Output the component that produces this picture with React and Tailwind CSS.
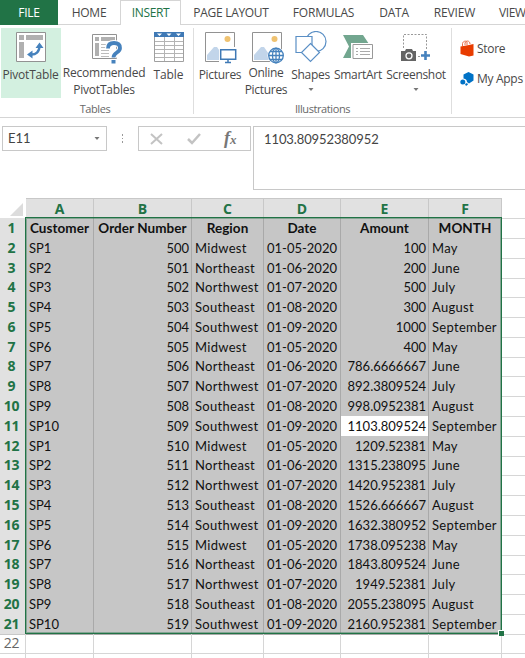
import React from 'react'

const tabs = [
  { name: 'HOME', style: 'w-[62px] tracking-[-0.25px]' },
  { name: 'INSERT', style: 'w-[61px] tracking-[-0.4px]', active: true },
  { name: 'PAGE LAYOUT', style: 'w-[100px] tracking-[-0.3px]' },
  { name: 'FORMULAS', style: 'w-[85px] tracking-[-0.2px]' },
  { name: 'DATA', style: 'w-[56px] tracking-[-0.2px]' },
  { name: 'REVIEW', style: 'w-[65px] tracking-[-0.1px]' },
  { name: 'VIEW', style: 'w-[38px] pl-3 text-left! tracking-[-0.4px]' },
]

const columns = [
  { letter: 'A', title: 'Customer' },
  { letter: 'B', title: 'Order Number' },
  { letter: 'C', title: 'Region' },
  { letter: 'D', title: 'Date' },
  { letter: 'E', title: 'Amount' },
  { letter: 'F', title: 'MONTH' },
]

const regions = ['Midwest', 'Northeast', 'Northwest', 'Southeast', 'Southwest']
const dates = ['01-05-2020', '01-06-2020', '01-07-2020', '01-08-2020', '01-09-2020']
const months = ['May', 'June', 'July', 'August', 'September']
const amounts = [
  '100', '200', '500', '300', '1000', '400', '786.6666667', '892.3809524', '998.0952381', '1103.809524',
  '1209.52381', '1315.238095', '1420.952381', '1526.666667', '1632.380952', '1738.095238', '1843.809524',
  '1949.52381', '2055.238095', '2160.952381',
]

const rows = amounts.map((amount, i) => ({
  customer: `SP${(i % 10) + 1}`,
  order: 500 + i,
  region: regions[i % 5],
  date: dates[i % 5],
  amount,
  month: months[i % 5],
}))

const gridCols = 'grid grid-cols-[26px_68px_98px_72px_77px_88px_73px_1fr]'

function PivotIcon() {
  return (
    <svg width="30" height="30" viewBox="0 0 30 30" fill="none">
      <path d="M.5.5h29v29H.5z" fill="#fff" stroke="#929292" />
      <path d="M3 3h5v5H3zM10 3h17v5H10zM3 10h5v16H3z" fill="#b0b0b0" />
      <path d="M14 22.500c6 .6 9.500-2.500 9.500-9" stroke="#4682bd" strokeWidth="2.400" />
      <path d="M23.500 10.500 27.500 16h-8zM11 22.500l5.500-4v8z" fill="#4682bd" />
    </svg>
  )
}

function RecommendedIcon() {
  return (
    <svg width="32" height="32" viewBox="0 0 32 32" fill="none">
      <path d="M1.500 2.500h24v24h-24z" fill="#fff" stroke="#929292" />
      <path d="M4 5h4v4H4zM10 5h14v4H10zM4 11h4v13H4z" fill="#b0b0b0" />
      <path d="M10 12.500h10M10 15.500h9M10 18.500h8M10 21.500h8M10 24.500h8" stroke="#bdbdbd" />
      <path d="M17 16.500c0-4 2.500-5.500 6-5.500 4 0 6 2 6 5 0 5-6.500 4-6.500 10" stroke="#fff" strokeWidth="6" />
      <path d="M17 16.500c0-4 2.500-5.500 6-5.500 4 0 6 2 6 5 0 5-6.500 4-6.500 9.500" stroke="#4682bd" strokeWidth="3.800" />
      <path d="M20.500 28h4v3.500h-4z" fill="#4682bd" />
    </svg>
  )
}

function TableIcon() {
  return (
    <svg width="30" height="30" viewBox="0 0 30 30" fill="none">
      <path d="M.5.5h29v29H.5z" fill="#fff" stroke="#a0a0a0" />
      <path d="M0 0h30v5H0z" fill="#3f79b5" />
      <path d="M3 1.500h5L5.500 4zM12.500 1.500h5L15 4zM22 1.500h5L24.500 4z" fill="#fff" />
      <path d="M10.500 5v24M20.500 5v24M1 9.500h28M1 13.500h28M1 17.500h28M1 21.500h28M1 25.500h28" stroke="#b4b4b4" />
    </svg>
  )
}

function PhotoBase() {
  return (
    <>
      <path d="M.5.5h29v29H.5z" fill="#fff" stroke="#929292" />
      <circle cx="22.500" cy="7" r="3" fill="#efc271" />
      <path d="M2 28v-5l7-8h3l9 13z" fill="#c2d5ea" />
    </>
  )
}

function PicturesIcon() {
  return (
    <svg width="32" height="32" viewBox="0 0 32 32" fill="none">
      <PhotoBase />
      <path d="M14 15h18v17H14z" fill="#fff" />
      <path d="M15.700 17.700h15v9.500h-15z" fill="#fff" stroke="#3f79b5" strokeWidth="1.500" />
      <path d="M23 27.500V30M20 30.500h6" stroke="#3f79b5" strokeWidth="1.500" />
    </svg>
  )
}

function OnlinePicturesIcon() {
  return (
    <svg width="32" height="32" viewBox="0 0 32 32" fill="none">
      <PhotoBase />
      <circle cx="24" cy="23.500" r="8.500" fill="#fff" />
      <g stroke="#4682bd" strokeWidth="1.300">
        <circle cx="24" cy="23.500" r="7.300" />
        <ellipse cx="24" cy="23.500" rx="3.500" ry="7.300" />
        <path d="M24 16v15M16.700 23.500h14.600M18 19.500h12M18 27.500h12" />
      </g>
    </svg>
  )
}

function ShapesIcon() {
  return (
    <svg width="32" height="32" viewBox="0 0 32 32" fill="#fff" stroke="#5a8fc5" strokeWidth="1.200">
      <circle cx="21" cy="10.500" r="10" />
      <path d="M1 5.500h16v16H1z" />
      <path d="m15.500 12.500 9 9-9 9-9-9z" />
    </svg>
  )
}

function SmartArtIcon() {
  return (
    <svg width="30" height="26" viewBox="0 0 30 26" fill="none">
      <path d="M0 0h20l6 9-8 14H0l6-11.500z" fill="#72a68f" />
      <path d="M8 8h22v18H8z" fill="#fff" />
      <path d="M10 9.500h19.500v14H10z" fill="#fff" stroke="#999" />
      <path d="M13 13.500h2M17 13.500h10M13 16.500h2M17 16.500h10M13 19.500h2M17 19.500h10" stroke="#aaa" />
    </svg>
  )
}

function ScreenshotIcon() {
  return (
    <svg width="30" height="30" viewBox="0 0 30 30" fill="none">
      <path d="M2.500 16V2.500h23V18M17 24.500h3" stroke="#999" strokeDasharray="2 1.500" />
      <path d="M0 19h4l1-2h6l1 2h3v10H0z" fill="#656565" />
      <circle cx="8" cy="23.800" r="3" fill="#656565" stroke="#fff" strokeWidth="1.300" />
      <path d="M20 23.500h9M24.500 19v9" stroke="#4682bd" strokeWidth="2.600" />
    </svg>
  )
}

function StoreIcon() {
  return (
    <svg width="14" height="17" viewBox="0 0 14 17" fill="none">
      <path d="M2.500 6V3.500C3 1 6 .5 7 2v3M5 5V3c1-3 5-2.500 5 1" stroke="#e8704a" />
      <path d="M.5 6.500 9 5v11.500L.5 14z" fill="#e83c00" />
      <path d="m9 5 4.500-1v11.500l-4.500 1z" fill="#e83c00" />
    </svg>
  )
}

function AppsIcon() {
  return (
    <svg width="14" height="14" viewBox="0 0 14 14" fill="#0072c6">
      <path d="m8.500 0 5 2.500v6l-4.500 3-2-1.500c0-2-1-3-3.500-3.500v-4z" />
      <circle cx="2.800" cy="10" r="2.500" />
      <path d="m5 12 2-1 1 1.500-2 1.500z" />
    </svg>
  )
}

function RibbonButton({ icon, lines, className, dropdown, iconClass = '' }) {
  return (
    <div className={`flex h-[70px] shrink-0 flex-col items-center ${className}`}>
      <div className={`flex h-[38px] items-start justify-center pt-1 ${iconClass}`}>{icon}</div>
      {lines.map(line => (
        <div key={line} className="h-[17px] whitespace-nowrap leading-[17px]">{line}</div>
      ))}
      {dropdown && <Caret className="mt-[5px]" />}
    </div>
  )
}

function Caret({ className = '' }) {
  return (
    <svg className={className} width="6" height="4" viewBox="0 0 6 4">
      <path d="M.5 0h5L3 3z" fill="#777" />
    </svg>
  )
}

function Ribbon() {
  return (
    <div className="flex h-[93px] border-b border-[#d5d5d5] text-[12px] text-[#484848]">
      <div className="w-[193px] pl-px pt-[3px]">
        <div className="flex">
          <RibbonButton className="w-[60px] bg-[#d3f0e0] pr-px tracking-[-0.2px]" icon={<PivotIcon />} lines={['PivotTable']} />
          <RibbonButton className="w-[86px] tracking-[-0.2px]" iconClass="pl-[6px]" icon={<RecommendedIcon />} lines={['Recommended', 'PivotTables']} />
          <RibbonButton className="w-[43px] tracking-[-0.1px]" icon={<TableIcon />} lines={['Table']} />
        </div>
        <div className="mt-0.5 pr-1 text-center text-[11px] leading-[18px] tracking-[-0.4px] text-[#686868]">Tables</div>
      </div>
      <div className="my-[3px] w-px bg-[#dedede]" />
      <div className="w-[257px] pl-[3px] pt-[3px]">
        <div className="flex">
          <RibbonButton className="w-[46px] tracking-[-0.3px]" iconClass="pl-0.5" icon={<PicturesIcon />} lines={['Pictures']} />
          <RibbonButton className="w-[46px] tracking-[-0.3px]" iconClass="pl-1" icon={<OnlinePicturesIcon />} lines={['Online', 'Pictures']} />
          <RibbonButton className="w-[43px] tracking-[-0.3px]" iconClass="-mt-px mb-px" icon={<ShapesIcon />} lines={['Shapes']} dropdown />
          <RibbonButton className="w-[52px] tracking-[-0.3px]" iconClass="pt-[7px]" icon={<SmartArtIcon />} lines={['SmartArt']} />
          <RibbonButton className="w-[64px] tracking-[-0.3px]" icon={<ScreenshotIcon />} lines={['Screenshot']} dropdown />
        </div>
        <div className="mt-0.5 pr-[3px] text-center text-[11px] leading-[18px] tracking-[-0.4px] text-[#686868]">Illustrations</div>
      </div>
      <div className="my-[3px] w-px bg-[#dedede]" />
      <div className="flex flex-col gap-[13px] pl-2 pt-[15px] tracking-[-0.3px]">
        <div className="flex h-[17px] items-center gap-[3px]"><StoreIcon />Store</div>
        <div className="flex h-[17px] items-center gap-[3px] whitespace-nowrap"><AppsIcon />My Apps</div>
      </div>
    </div>
  )
}

function FormulaBar() {
  return (
    <div className="flex h-[80px] items-start pl-0.5 pt-2">
      <div className="flex h-[25px] w-[105px] items-center justify-between border border-[#c8c8c8] pl-[5px] pr-1.5 font-[Lato] text-[13px] text-[#444]">
        E11
        <Caret />
      </div>
      <div className="flex h-[25px] w-[31px] flex-col items-center justify-center gap-0.5">
        <i className="size-[1.5px] bg-[#999]" />
        <i className="size-[1.5px] bg-[#999]" />
        <i className="size-[1.5px] bg-[#999]" />
      </div>
      <div className="flex h-[25px] w-[113px] items-center border border-[#c8c8c8] pl-[11px]">
        <svg width="13" height="12" viewBox="0 0 13 12" stroke="#c3c3c3" strokeWidth="2">
          <path d="m1 1 11 10M12 1 1 11" />
        </svg>
        <svg className="ml-6" width="14" height="12" viewBox="0 0 14 12" fill="none" stroke="#c3c3c3" strokeWidth="2.500">
          <path d="m1 6 4 4 8-9" />
        </svg>
        <span className="-mt-0.5 ml-[23px] font-['Liberation_Serif'] text-[18px] font-bold italic leading-none text-[#777]">
          f<span className="text-[13px]">x</span>
        </span>
      </div>
      <div className="ml-0.5 h-[64px] flex-1 border border-r-0 border-[#c8c8c8] pl-[10px] font-[Lato] text-[13px] leading-[24px] tracking-[-0.1px] text-[#444]">
        1103.80952380952
      </div>
    </div>
  )
}

const cell = 'border-b border-r border-[#a9a9a9] bg-[#c6c6c6] whitespace-nowrap'

function RowNumber({ n, selected }) {
  return (
    <div
      className={`border-b border-r pr-0.5 text-center font-['Open_Sans'] text-[14px] leading-[20px] tracking-[-0.2px] ${
        selected ? 'border-[#c8c8c8] bg-[#e1e1e1] font-bold text-[#217346]' : 'border-[#d6d6d6] text-[#666]'
      }`}
    >
      {n}
    </div>
  )
}

function Sheet() {
  return (
    <div className="relative font-[Lato] text-[13px] leading-[20px] text-[#111]">
      <div className={`${gridCols} h-5 font-['Open_Sans'] text-[14px] font-bold text-[#217346]`}>
        <div className="flex items-end justify-end border-b border-[#c8c8c8] pb-0.5 pr-[3px]">
          <svg width="13" height="13" viewBox="0 0 13 13"><path d="M13 0v13H0z" fill="#dcdcdc" /></svg>
        </div>
        {columns.map(col => (
          <div key={col.letter} className="border-r border-t border-[#c8c8c8] bg-[#e1e1e1] text-center leading-[20px]">{col.letter}</div>
        ))}
        <div className="border-b border-[#d6d6d6]" />
      </div>
      <div className={`${gridCols} h-[19.79px] text-center text-[13.5px] font-bold`}>
        <RowNumber n={1} selected />
        {columns.map(col => <div key={col.letter} className={`${cell} tracking-[0.05px]`}>{col.title}</div>)}
        <div className="border-b border-[#d6d6d6]" />
      </div>
      {rows.map((row, i) => (
        <div key={row.order} className={`${gridCols} h-[19.79px]`}>
          <RowNumber n={i + 2} selected />
          <div className={`${cell} pl-[3px]`}>{row.customer}</div>
          <div className={`${cell} pr-0.5 text-right`}>{row.order}</div>
          <div className={`${cell} pl-[3px] tracking-[0.3px]`}>{row.region}</div>
          <div className={`${cell} pr-[3px] text-right`}>{row.date}</div>
          <div className={`${cell} pr-0.5 text-right ${i === 9 ? 'bg-white!' : ''}`}>{row.amount}</div>
          <div className={`${cell} pl-[3px] tracking-[0.3px]`}>{row.month}</div>
          <div className="border-b border-[#d6d6d6]" />
        </div>
      ))}
      <div className={`${gridCols} h-5`}>
        <RowNumber n={22} />
        {columns.map(col => <div key={col.letter} className="border-b border-r border-[#d6d6d6]" />)}
        <div className="border-b border-[#d6d6d6]" />
      </div>
      <div className={`${gridCols} h-5`}>
        <div className="border-r border-[#d6d6d6]" />
        {columns.map(col => <div key={col.letter} className="border-r border-[#d6d6d6]" />)}
      </div>
      {/* selection outline with the fill handle */}
      <div className="absolute left-[25px] top-[19px] h-[417px] w-[477px] border border-[#217346] outline-1 -outline-offset-2 outline-[#217346]/40">
        <div className="absolute -bottom-[3px] -right-[3px] size-[6px] border-l border-t border-white bg-[#217346]" />
      </div>
    </div>
  )
}

export default function App() {
  return (
    <div className="h-[658px] w-[525px] overflow-hidden bg-white font-['Open_Sans',sans-serif]">
      <div className="flex h-[25px] text-[12px] text-[#484848]">
        <div className="w-[58px] shrink-0 bg-[#217346] text-center leading-[26px] text-white tracking-[-0.2px]">FILE</div>
        {tabs.map(tab => (
          <div
            key={tab.name}
            className={`shrink-0 whitespace-nowrap text-center ${tab.style} ${
              tab.active ? 'border-x border-t border-[#d5d5d5] leading-[24px] text-[#217346]' : 'border-b border-[#d5d5d5] leading-[26px]'
            }`}
          >
            {tab.name}
          </div>
        ))}
      </div>
      <Ribbon />
      <FormulaBar />
      <Sheet />
    </div>
  )
}
